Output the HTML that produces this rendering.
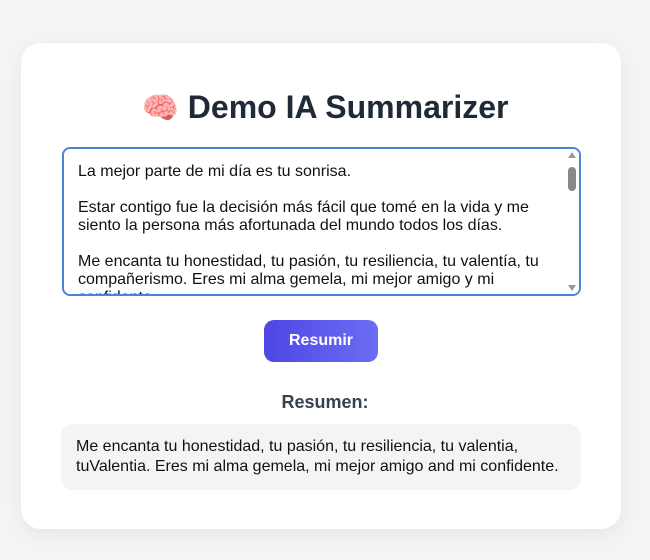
<!DOCTYPE html>
<html><head><meta charset="utf-8"><style>
body{margin:0;width:650px;height:560px;background:#f3f4f6;font-family:"Liberation Sans",Arial,sans-serif;overflow:hidden;position:relative}
.card{position:absolute;left:21px;top:43px;width:600px;height:486px;background:#fff;border-radius:20px;box-shadow:0 6px 20px rgba(0,0,0,.06)}
h1{position:absolute;left:0;right:0;top:88px;margin:0;text-align:center;font-size:32px;font-weight:bold;color:#1f2937;line-height:38px}
.ta{position:absolute;left:62px;top:147px;width:515px;height:145px;border:2px solid #4a86d6;border-radius:8px;overflow:hidden;background:#fff}
.ta .t{position:absolute;left:14px;top:14px;width:470px;font-size:16px;line-height:18px;color:#111}
.ta p{margin:0 0 18px}
.sb{position:absolute;right:0;top:0;width:14px;height:145px;background:#fff}
.thumb{position:absolute;left:3px;top:18px;width:8px;height:24px;border-radius:4px;background:#888}
.btn{position:absolute;left:264px;top:320px;width:114px;height:42px;border-radius:10px;background:linear-gradient(90deg,#4f46e5,#6a6ef2);color:#fff;font-weight:bold;font-size:16px;line-height:42px;text-align:center}
h2{position:absolute;left:0;right:0;top:391px;margin:0;text-align:center;font-size:18px;font-weight:bold;color:#374151;line-height:22px}
.sum{position:absolute;left:61px;top:424px;width:520px;height:66px;background:#f3f4f6;border-radius:12px;box-sizing:border-box;padding:13px 15px;font-size:16px;line-height:19.5px;color:#111}
</style></head><body>
<div class="card"></div>
<h1><span style="font-size:30px">🧠</span> Demo IA Summarizer</h1>
<div class="ta"><div class="t">
<p>La mejor parte de mi día es tu sonrisa.</p>
<p>Estar contigo fue la decisión más fácil que tomé en la vida y me siento la persona más afortunada del mundo todos los días.</p>
<p>Me encanta tu honestidad, tu pasión, tu resiliencia, tu valentía, tu compañerismo. Eres mi alma gemela, mi mejor amigo y mi confidente.</p>
</div>
<div class="sb">
<svg width="14" height="145" style="position:absolute;left:0;top:0"><polygon points="3,9 11,9 7,3" fill="#999"/><polygon points="3,136 11,136 7,142" fill="#999"/></svg>
<div class="thumb"></div></div></div>
<div class="btn">Resumir</div>
<h2>Resumen:</h2>
<div class="sum">Me encanta tu honestidad, tu pasión, tu resiliencia, tu valentia, tuValentia. Eres mi alma gemela, mi mejor amigo and mi confidente.</div>
</body></html>
